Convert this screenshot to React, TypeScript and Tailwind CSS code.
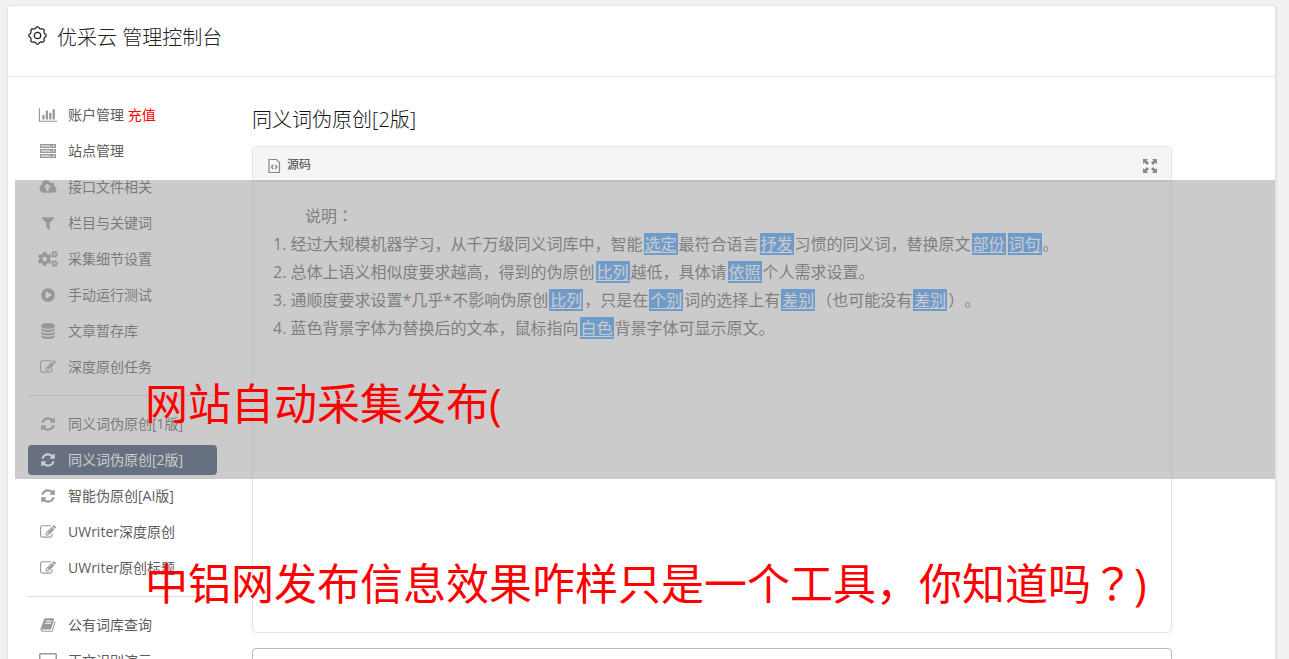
import React from "react";
import { FaCogs } from "react-icons/fa";

const paths = {
  chart: "M640 896v512h-256v-512h256zm384-512v1024h-256v-1024h256zm1024 1152v128h-2048v-1536h128v1408h1920zm-640-896v768h-256v-768h256zm384-384v1152h-256v-1152h256z",
  cloud: "M1280 928q0-14-9-23l-352-352q-9-9-23-9t-23 9l-351 351q-10 12-10 24 0 14 9 23t23 9h224v352q0 13 9.500 22.500t22.500 9.500h192q13 0 22.500-9.500t9.500-22.500v-352h224q13 0 22.500-9.500t9.500-22.500zm640 224q0 159-112.500 271.500t-271.500 112.500h-1088q-185 0-316.500-131.500t-131.500-316.500q0-130 70-240t188-165q-2-30-2-43 0-212 150-362t362-150q156 0 285.500 87t188.500 231q71-62 166-62 106 0 181 75t75 181q0 76-41 138 130 31 213.500 135.500t83.500 238.500z",
  filter: "M1595 295q17 41-14 70l-493 493v742q0 42-39 59-13 5-25 5-27 0-45-19l-256-256q-19-19-19-45v-486l-493-493q-31-29-14-70 17-39 59-39h1280q42 0 59 39z",
  play: "M896 128q209 0 385.500 103t279.500 279.500 103 385.500-103 385.500-279.500 279.500-385.500 103-385.500-103-279.500-279.500-103-385.500 103-385.500 279.500-279.500 385.500-103zm384 823q32-18 32-55t-32-55l-544-320q-31-19-64-1-32 19-32 56v640q0 37 32 56 16 8 32 8 17 0 32-9z",
  database: "M896 768q237 0 443-43t325-127v170q0 69-103 128t-280 93.500-385 34.500-385-34.500-280-93.500-103-128v-170q119 84 325 127t443 43zm0 768q237 0 443-43t325-127v170q0 69-103 128t-280 93.500-385 34.500-385-34.500-280-93.500-103-128v-170q119 84 325 127t443 43zm0-384q237 0 443-43t325-127v170q0 69-103 128t-280 93.500-385 34.500-385-34.500-280-93.500-103-128v-170q119 84 325 127t443 43zm0-1152q208 0 385 34.500t280 93.500 103 128v128q0 69-103 128t-280 93.500-385 34.500-385-34.500-280-93.500-103-128v-128q0-69 103-128t280-93.500 385-34.500z",
  edit: "M888 1184l116-116-152-152-116 116v56h96v96h56zm440-720q-16-16-33 1l-350 350q-17 17-1 33t33-1l350-350q17-17 1-33zm80 594v190q0 119-84.500 203.500t-203.500 84.500h-832q-119 0-203.500-84.500t-84.500-203.500v-832q0-119 84.500-203.500t203.500-84.500h832q63 0 117 25 15 7 18 23 3 17-9 29l-49 49q-14 14-32 8-23-6-45-6h-832q-66 0-113 47t-47 113v832q0 66 47 113t113 47h832q66 0 113-47t47-113v-126q0-13 9-22l64-64q15-15 35-7t20 29zm-96-738l288 288-672 672h-288v-288zm444 132l-92 92-288-288 92-92q28-28 68-28t68 28l152 152q28 28 28 68t-28 68z",
  refresh: "M1639 1056q0 5-1 7-64 268-268 434.500t-478 166.500q-146 0-282.500-55t-243.500-157l-129 129q-19 19-45 19t-45-19-19-45v-448q0-26 19-45t45-19h448q26 0 45 19t19 45-19 45l-137 137q71 66 161 102t187 36q134 0 250-65t186-179q11-17 53-117 8-23 30-23h192q13 0 22.500 9.500t9.500 22.500zm25-800v448q0 26-19 45t-45 19h-448q-26 0-45-19t-19-45 19-45l138-138q-148-137-349-137-134 0-250 65t-186 179q-11 17-53 117-8 23-30 23h-199q-13 0-22.500-9.500t-9.500-22.500v-7q65-268 270-434.500t480-166.500q146 0 284 55.500t245 156.500l130-129q19-19 45-19t45 19 19 45z",
  book: "M1703 478q40 57 18 129l-275 906q-19 64-76.500 107.500t-122.500 43.500h-923q-77 0-148.500-53.500t-99.500-131.500q-24-67-2-127 0-4 3-27t4-37q1-8-3-21.500t-3-19.500q2-11 8-21t16.500-23.500 16.500-23.500q23-38 45-91.500t30-91.500q3-10 .5-30t-.5-28q3-11 17-28t17-23q21-36 42-92t25-90q1-9-2.500-32t.5-28q4-13 22-30.500t22-22.500q19-26 42.500-84.500t27.500-96.500q1-8-3-25.500t-2-26.500q2-8 9-18t18-23 17-21q8-12 16.500-30.500t15-35 16-36 19.500-32 26.500-23.500 36-11.500 47.500 5.500l-1 3q38-9 51-9h761q74 0 114 56t18 130l-274 906q-36 119-71.500 153.500t-128.500 34.500h-869q-27 0-38 15-11 16-1 43 24 70 144 70h923q29 0 56-15.500t35-41.500l300-987q7-22 5-57 38 15 59 43zm-1064 2q-4 13 2 22.500t20 9.500h608q13 0 25.500-9.500t16.500-22.500l21-64q4-13-2-22.500t-20-9.500h-608q-13 0-25.500 9.500t-16.500 22.500zm-83 256q-4 13 2 22.500t20 9.500h608q13 0 25.500-9.500t16.500-22.500l21-64q4-13-2-22.500t-20-9.500h-608q-13 0-25.500 9.500t-16.500 22.500z",
};

type IconName = keyof typeof paths | "server" | "cogs" | "desktop";

function Icon({ name }: { name: IconName }) {
  if (name === "cogs") return <FaCogs className="h-4 w-5" aria-hidden="true" />;
  if (name === "server")
    return (
      <svg viewBox="0 0 20 14" className="h-3.5 w-5" aria-hidden="true">
        {[0, 5, 10].map((y) => (
          <g key={y}>
            <rect x="2" y={y} width="16" height="4" fill="currentColor" />
            <path d={`M3 ${y + 1.5}h9M3 ${y + 2.500}h11`} stroke="#fff" strokeWidth=".5" />
            <rect x="15" y={y + 1.2} width="1.5" height="1.400" fill="#fff" />
          </g>
        ))}
      </svg>
    );
  if (name === "desktop")
    return (
      <svg viewBox="0 0 20 16" className="h-4 w-5" fill="none" stroke="currentColor" aria-hidden="true">
        <rect x="1.750" y=".750" width="16.500" height="11" rx="1" strokeWidth="1.500" />
        <path d="M6 15h8" />
      </svg>
    );
  const box = name === "chart" ? "0 0 2048 1792" : name === "cloud" ? "0 0 1920 1792" : "0 0 1792 1792";
  return (
    <svg viewBox={box} className="h-4 w-5" fill="currentColor" aria-hidden="true">
      <path d={paths[name]} />
    </svg>
  );
}

function Gear() {
  const pts: string[] = [];
  for (let i = 0; i <= 96; i++) {
    const a = (i / 96) * Math.PI * 2;
    const wave = Math.max(-1, Math.min(1, 1.8 * Math.cos(8 * a)));
    const r = 7.5 + 0.6 * wave;
    pts.push(`${(9 + r * Math.sin(a)).toFixed(2)} ${(9 - r * Math.cos(a)).toFixed(2)}`);
  }
  return (
    <svg viewBox="0 0 18 18" className="size-[19px]" fill="none" stroke="currentColor" strokeWidth="1.200" aria-hidden="true">
      <path d={`M${pts.join("L")}Z`} strokeLinejoin="round" />
      <circle cx="9" cy="9" r="3" />
    </svg>
  );
}

type Item = { icon: IconName; label: string; extra?: string; active?: boolean };

const groups: Item[][] = [
  [
    { icon: "chart", label: "账户管理", extra: "充值" },
    { icon: "server", label: "站点管理" },
    { icon: "cloud", label: "接口文件相关" },
    { icon: "filter", label: "栏目与关键词" },
    { icon: "cogs", label: "采集细节设置" },
    { icon: "play", label: "手动运行测试" },
    { icon: "database", label: "文章暂存库" },
    { icon: "edit", label: "深度原创任务" },
  ],
  [
    { icon: "refresh", label: "同义词伪原创[1版]" },
    { icon: "refresh", label: "同义词伪原创[2版]", active: true },
    { icon: "refresh", label: "智能伪原创[AI版]" },
    { icon: "edit", label: "UWriter深度原创" },
    { icon: "edit", label: "UWriter原创标题" },
  ],
  [
    { icon: "book", label: "公有词库查询" },
    { icon: "desktop", label: "正文识别演示" },
  ],
];

function NavItem({ item }: { item: Item }) {
  return (
    <li>
      <a
        href="#"
        className={
          item.active
            ? "flex h-[30px] items-center gap-2.5 rounded bg-[#374969] pl-[10px] text-white"
            : "flex h-[30px] items-center gap-2.5 rounded pl-[10px] text-[#5c5c5c]"
        }
      >
        <span className={item.active ? "text-white" : "text-[#999]"}>
          <Icon name={item.icon} />
        </span>
        <span>
          {item.label}
          {item.extra && <span className="text-[#f00]"> {item.extra}</span>}
        </span>
      </a>
    </li>
  );
}

/** A punctuation mark centred in its em box. */
function Mark({ children }: { children: string }) {
  return (
    <span lang="zh-Hant" className="font-['Noto_Sans_CJK_TC',sans-serif] leading-none">
      {children}
    </span>
  );
}

function W({ children }: { children: React.ReactNode }) {
  return (
    <a href="#" className="mx-px bg-[#479fff] px-px text-white underline underline-offset-2">
      {children}
    </a>
  );
}

export default function App() {
  return (
    <div
      lang="zh-Hans"
      className="h-screen overflow-hidden bg-[#f1f1f1] pt-[5px] pr-3 pl-[7px] font-['Open_Sans','Noto_Sans_CJK_SC',sans-serif] text-sm [text-spacing-trim:space-all]"
    >
      <div className="relative h-full rounded-t border border-r-2 border-b-0 border-[#e4e4e4] bg-white">
        <header className="flex h-[71px] items-start gap-2.5 border-b border-[#e4e4e4] pt-5 pl-5 text-[#222]">
          <Gear />
          <h1 className="text-xl leading-6 font-light">优采云 管理控制台</h1>
        </header>

        <div className="flex items-start">
          <nav className="w-[209px] shrink-0 pt-[23px] pl-5">
            {groups.map((group, i) => (
              <ul key={i} className={i === 0 ? "flex flex-col gap-1.5" : "mt-[13px] flex flex-col gap-1.5 border-t border-[#ddd] pt-[13px]"}>
                {group.map((item) => (
                  <NavItem key={item.label} item={item} />
                ))}
              </ul>
            ))}
          </nav>

          <main className="mr-[103px] ml-[35px] min-w-0 flex-1 pt-[31px]">
            <h2 className="text-xl leading-6 font-light text-[#111]">同义词伪原创[2版]</h2>
            <section className="mt-[14px] h-[487px] rounded border border-[#e4e4e4]">
              <div className="flex h-[35px] items-center justify-between border-b border-[#ddd] bg-[#f5f5f5] px-3.5 pt-0.5 text-xs text-[#444]">
                <span className="flex items-center gap-1.5">
                  <svg viewBox="0 0 14 16" className="h-4 w-3.5" fill="none" stroke="#888" aria-hidden="true">
                    <path d="M2 2.500h7.500l3 3V15.500H2z" strokeWidth="1.200" />
                    <path d="M6.200 8L4.500 10l1.700 2M8.300 8L10 10l-1.700 2" strokeWidth="1.300" />
                  </svg>
                  源码
                </span>
                <button type="button" aria-label="全屏" className="pt-0.5 text-[#888]">
                  <svg viewBox="0 0 14 14" className="size-3.5" fill="currentColor" aria-hidden="true">
                    <path d="M0 0h5L3.500 1.500 6 4 4 6 1.500 3.500 0 5zM14 0v5l-1.500-1.500L10 6 8 4l2.500-2.500L9 0zM0 14V9l1.500 1.500L4 8l2 2-2.500 2.500L5 14zM14 14H9l1.500-1.500L8 10l2-2 2.500 2.500L14 9z" />
                  </svg>
                </button>
              </div>
              <div className="pt-5 pl-5 text-base leading-7 text-[#666]">
                <p className="pl-8">说明<Mark>：</Mark></p>
                <p>1. 经过大规模机器学习，从千万级同义词库中，智能<W>选定</W>最符合语言<W>抒发</W>习惯的同义词，替换原文<W>部份</W><W>词句</W>。</p>
                <p>2. 总体上语义相似度要求越高，得到的伪原创<W>比列</W>越低，具体请<W>依照</W>个人需求设置。</p>
                <p>3. 通顺度要求设置*几乎*不影响伪原创<W>比列</W>，只是在<W>个别</W>词的选择上有<W>差别</W>（也可能没有<W>差别</W>）。</p>
                <p>4. 蓝色背景字体为替换后的文本，鼠标指向<W>白色</W>背景字体可显示原文。</p>
              </div>
            </section>
            <section className="mt-[15px] h-10 rounded border border-[#bbb]" />
          </main>
        </div>

        <div className="pointer-events-none absolute top-[174px] right-0 left-[7px] h-[299px] bg-[#979797]/50" />
        <div className="pointer-events-none absolute top-[368px] left-[137px] text-[43px] leading-[60px] whitespace-nowrap text-[#f00]">
          <p>网站自动采集发布(</p>
          <p className="mt-[120px]">中铝网发布信息效果咋样只是一个工具，你知道吗<Mark>？</Mark>)</p>
        </div>
      </div>
    </div>
  );
}
